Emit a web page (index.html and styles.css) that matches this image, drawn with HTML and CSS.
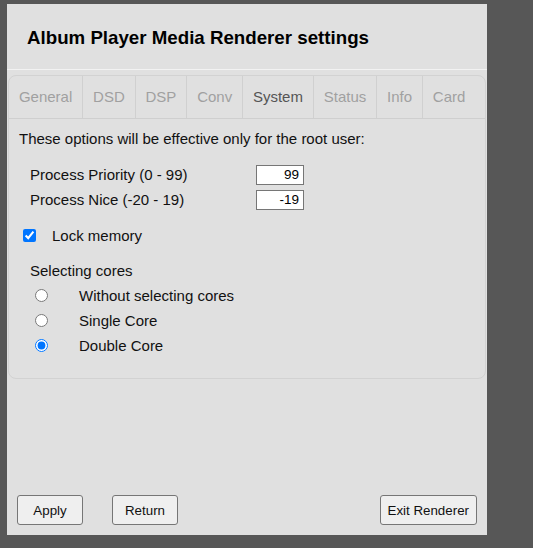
FILE: index.html
```html
<!DOCTYPE html>
<html lang="en">
<head>
    <meta charset="UTF-8">
    <title>Album Player Media Renderer settings</title>
    <link rel="stylesheet" href="styles.css">
</head>
<body>
<div class="panel">
    <div class="header">
        <h3>Album Player Media Renderer settings</h3>
    </div>

    <div class="tabbox">
        <ul class="tabs">
            <li>General</li>
            <li>DSD</li>
            <li>DSP</li>
            <li>Conv</li>
            <li class="active">System</li>
            <li>Status</li>
            <li>Info</li>
            <li class="last">Card</li>
        </ul>

        <div class="tab-content">
            <p class="note">These options will be effective only for the root user:</p>

            <div class="field">
                <label for="prio">Process Priority (0 - 99)</label>
                <input type="text" id="prio" value="99">
            </div>
            <div class="field">
                <label for="nice">Process Nice (-20 - 19)</label>
                <input type="text" id="nice" value="-19">
            </div>

            <div class="check">
                <input type="checkbox" id="lockmem" checked>
                <label for="lockmem">Lock memory</label>
            </div>

            <div class="cores">
                <div class="cores-title">Selecting cores</div>
                <div class="radio">
                    <input type="radio" name="cores" id="c0">
                    <label for="c0">Without selecting cores</label>
                </div>
                <div class="radio">
                    <input type="radio" name="cores" id="c1">
                    <label for="c1">Single Core</label>
                </div>
                <div class="radio">
                    <input type="radio" name="cores" id="c2" checked>
                    <label for="c2">Double Core</label>
                </div>
            </div>
        </div>
    </div>

    <div class="footer">
        <button class="btn">Apply</button>
        <button class="btn btn-return">Return</button>
        <button class="btn btn-exit">Exit Renderer</button>
    </div>
</div>
</body>
</html>
```

FILE: styles.css
```css
body { margin: 0; background-color: #575757; font-family: "Liberation Sans", Arial, sans-serif; color: #111; }
.panel { width: 480px; height: 531px; margin: 4px 0 0 7px; background-color: #e0e0e0; display: flex; flex-direction: column; }
.header { height: 66px; border-bottom: 1px solid #f2f2f2; display: flex; align-items: center; padding: 2px 0 0 20px; box-sizing: border-box; }
.header h3 { margin: 0; font-size: 18.72px; font-weight: bold; color: #000; }
.tabbox { margin: 5px 1px 0 1px; height: 304px; border: 1px solid #d2d2d2; border-radius: 8px; box-sizing: border-box; }
.tabs { list-style: none; margin: 0; padding: 0; display: flex; height: 43px; border-bottom: 1px solid #cfcfcf; box-sizing: border-box; }
.tabs li { padding: 0 9.9px; line-height: 42px; font-size: 15px; color: #a0a0a0; border-right: 1px solid #d0d0d0; }
.tabs li.active { color: #555; }
.tabs li.last { border-right: none; }
.tab-content { padding: 10px 10px; font-size: 15px; }
.note { margin: 0 0 13px 0; line-height: 20px; }
.field { display: flex; align-items: center; height: 25px; padding-left: 11px; }
.field label { width: 226px; }
.field input { width: 48px; height: 20px; box-sizing: border-box; border: 1px solid #767676; background: #fff; text-align: right; font-family: "Liberation Sans", Arial, sans-serif; font-size: 13.5px; padding: 0 4px; }
.check { display: flex; align-items: center; margin-top: 14px; height: 18px; }
.check input { margin: 0 0 0 4px; width: 13px; height: 13px; }
.check label { margin-left: 16px; }
.cores { margin-top: 18px; padding-left: 11px; }
.cores-title { line-height: 18px; margin-bottom: 3px; }
.radio { display: flex; align-items: center; height: 25px; }
.radio input { margin: 0 0 0 5px; width: 13px; height: 13px; }
.radio label { margin-left: 31px; }
.footer { margin-top: auto; display: flex; padding: 0 10px 10px 10px; }
.btn { height: 30px; padding: 0 7px; border: 1px solid #767676; border-radius: 3px; background-color: #efefef; font-family: "Liberation Sans", Arial, sans-serif; font-size: 13.33px; color: #111; min-width: 66px; }
.btn-return { margin-left: 29px; }
.btn-exit { margin-left: auto; }
```
